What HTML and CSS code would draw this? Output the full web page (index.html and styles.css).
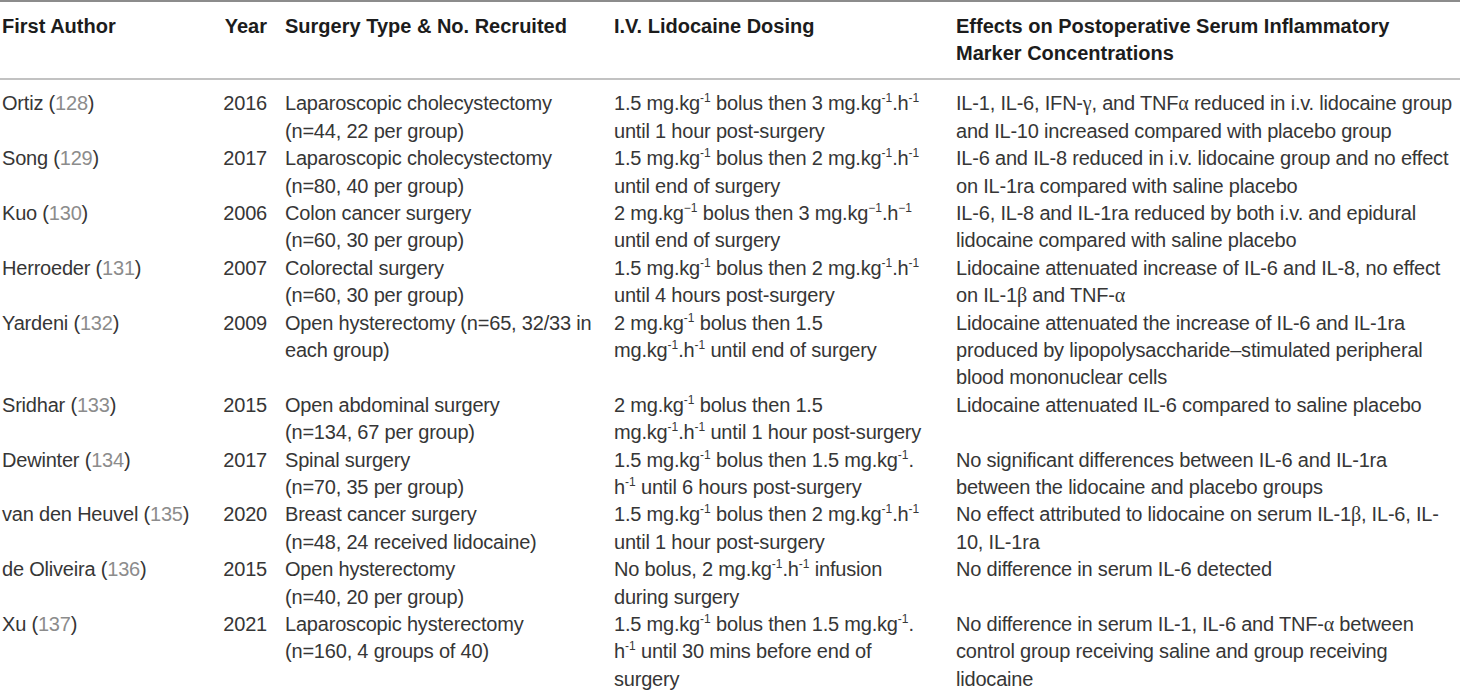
FILE: index.html
```html
<!DOCTYPE html>
<html lang="en">
<head>
<meta charset="utf-8">
<title>Lidocaine studies</title>
<link rel="stylesheet" href="styles.css">
</head>
<body>
<table class="tbl">
  <colgroup>
    <col class="w-author">
    <col class="w-year">
    <col class="w-surgery">
    <col class="w-dose">
    <col class="w-effect">
  </colgroup>
  <thead>
    <tr>
      <th class="c-author">First Author</th>
      <th class="c-year">Year</th>
      <th class="c-surgery">Surgery Type &amp; No. Recruited</th>
      <th class="c-dose">I.V. Lidocaine Dosing</th>
      <th class="c-effect">Effects on Postoperative Serum Inflammatory<br>Marker Concentrations</th>
    </tr>
  </thead>
  <tbody>
    <tr>
      <td class="c-author">Ortiz (<span class="ref">128</span>)</td>
      <td class="c-year">2016</td>
      <td class="c-surgery">Laparoscopic cholecystectomy<br>(n=44, 22 per group)</td>
      <td class="c-dose">1.5 mg.kg<sup>-1</sup> bolus then 3 mg.kg<sup>-1</sup>.h<sup>-1</sup><br>until 1 hour post-surgery</td>
      <td class="c-effect">IL-1, IL-6, IFN-<span class="gk">γ</span>, and TNF<span class="gk">α</span> reduced in i.v. lidocaine group<br>and IL-10 increased compared with placebo group</td>
    </tr>
    <tr>
      <td class="c-author">Song (<span class="ref">129</span>)</td>
      <td class="c-year">2017</td>
      <td class="c-surgery">Laparoscopic cholecystectomy<br>(n=80, 40 per group)</td>
      <td class="c-dose">1.5 mg.kg<sup>-1</sup> bolus then 2 mg.kg<sup>-1</sup>.h<sup>-1</sup><br>until end of surgery</td>
      <td class="c-effect">IL-6 and IL-8 reduced in i.v. lidocaine group and no effect<br>on IL-1ra compared with saline placebo</td>
    </tr>
    <tr>
      <td class="c-author">Kuo (<span class="ref">130</span>)</td>
      <td class="c-year">2006</td>
      <td class="c-surgery">Colon cancer surgery<br>(n=60, 30 per group)</td>
      <td class="c-dose">2 mg.kg<sup>−1</sup> bolus then 3 mg.kg<sup>−1</sup>.h<sup>−1</sup><br>until end of surgery</td>
      <td class="c-effect">IL-6, IL-8 and IL-1ra reduced by both i.v. and epidural<br>lidocaine compared with saline placebo</td>
    </tr>
    <tr>
      <td class="c-author">Herroeder (<span class="ref">131</span>)</td>
      <td class="c-year">2007</td>
      <td class="c-surgery">Colorectal surgery<br>(n=60, 30 per group)</td>
      <td class="c-dose">1.5 mg.kg<sup>-1</sup> bolus then 2 mg.kg<sup>-1</sup>.h<sup>-1</sup><br>until 4 hours post-surgery</td>
      <td class="c-effect">Lidocaine attenuated increase of IL-6 and IL-8, no effect<br>on IL-1<span class="gk">β</span> and TNF-<span class="gk">α</span></td>
    </tr>
    <tr>
      <td class="c-author">Yardeni (<span class="ref">132</span>)</td>
      <td class="c-year">2009</td>
      <td class="c-surgery">Open hysterectomy (n=65, 32/33 in<br>each group)</td>
      <td class="c-dose">2 mg.kg<sup>-1</sup> bolus then 1.5<br>mg.kg<sup>-1</sup>.h<sup>-1</sup> until end of surgery</td>
      <td class="c-effect">Lidocaine attenuated the increase of IL-6 and IL-1ra<br>produced by lipopolysaccharide–stimulated peripheral<br>blood mononuclear cells</td>
    </tr>
    <tr>
      <td class="c-author">Sridhar (<span class="ref">133</span>)</td>
      <td class="c-year">2015</td>
      <td class="c-surgery">Open abdominal surgery<br>(n=134, 67 per group)</td>
      <td class="c-dose">2 mg.kg<sup>-1</sup> bolus then 1.5<br>mg.kg<sup>-1</sup>.h<sup>-1</sup> until 1 hour post-surgery</td>
      <td class="c-effect">Lidocaine attenuated IL-6 compared to saline placebo</td>
    </tr>
    <tr>
      <td class="c-author">Dewinter (<span class="ref">134</span>)</td>
      <td class="c-year">2017</td>
      <td class="c-surgery">Spinal surgery<br>(n=70, 35 per group)</td>
      <td class="c-dose">1.5 mg.kg<sup>-1</sup> bolus then 1.5 mg.kg<sup>-1</sup>.<br>h<sup>-1</sup> until 6 hours post-surgery</td>
      <td class="c-effect">No significant differences between IL-6 and IL-1ra<br>between the lidocaine and placebo groups</td>
    </tr>
    <tr>
      <td class="c-author">van den Heuvel (<span class="ref">135</span>)</td>
      <td class="c-year">2020</td>
      <td class="c-surgery">Breast cancer surgery<br>(n=48, 24 received lidocaine)</td>
      <td class="c-dose">1.5 mg.kg<sup>-1</sup> bolus then 2 mg.kg<sup>-1</sup>.h<sup>-1</sup><br>until 1 hour post-surgery</td>
      <td class="c-effect">No effect attributed to lidocaine on serum IL-1<span class="gk">β</span>, IL-6, IL-<br>10, IL-1ra</td>
    </tr>
    <tr>
      <td class="c-author">de Oliveira (<span class="ref">136</span>)</td>
      <td class="c-year">2015</td>
      <td class="c-surgery">Open hysterectomy<br>(n=40, 20 per group)</td>
      <td class="c-dose">No bolus, 2 mg.kg<sup>-1</sup>.h<sup>-1</sup> infusion<br>during surgery</td>
      <td class="c-effect">No difference in serum IL-6 detected</td>
    </tr>
    <tr>
      <td class="c-author">Xu (<span class="ref">137</span>)</td>
      <td class="c-year">2021</td>
      <td class="c-surgery">Laparoscopic hysterectomy<br>(n=160, 4 groups of 40)</td>
      <td class="c-dose">1.5 mg.kg<sup>-1</sup> bolus then 1.5 mg.kg<sup>-1</sup>.<br>h<sup>-1</sup> until 30 mins before end of<br>surgery</td>
      <td class="c-effect">No difference in serum IL-1, IL-6 and TNF-<span class="gk">α</span> between<br>control group receiving saline and group receiving<br>lidocaine</td>
    </tr>
  </tbody>
</table>
</body>
</html>
```

FILE: styles.css
```css
html, body {
  margin: 0;
  padding: 0;
  background: #ffffff;
}

body {
  font-family: "Liberation Sans", Arial, sans-serif;
  font-size: 20px;
  color: #363636;
}

.tbl {
  width: 1460px;
  border-collapse: collapse;
  table-layout: fixed;
  border-top: 2px solid #8c8c8c;
}

.w-author { width: 200px; }
.w-year { width: 67px; }
.w-surgery { width: 347px; }
.w-dose { width: 342px; }
.w-effect { width: 504px; }

.tbl th,
.tbl td {
  padding: 0;
  text-align: left;
  vertical-align: top;
  line-height: 27.4px;
  white-space: nowrap;
  overflow: visible;
}

.tbl td {
  letter-spacing: -0.2px;
}

.tbl thead th {
  padding-top: 10.5px;
  padding-bottom: 10.5px;
  border-bottom: 2px solid #c2c2c2;
  font-weight: bold;
  color: #1c1c1c;
}

.tbl tbody tr:first-child td {
  padding-top: 10.5px;
}

.tbl .c-author { padding-left: 2px; }
.tbl .c-year { text-align: right; }
.tbl .c-surgery { padding-left: 18px; }

.ref { color: #8c8c8c; }

.gk { font-family: "Liberation Serif", "Times New Roman", serif; }

sup {
  font-size: 12px;
  line-height: 0;
  vertical-align: 8px;
  letter-spacing: 0;
}
```
